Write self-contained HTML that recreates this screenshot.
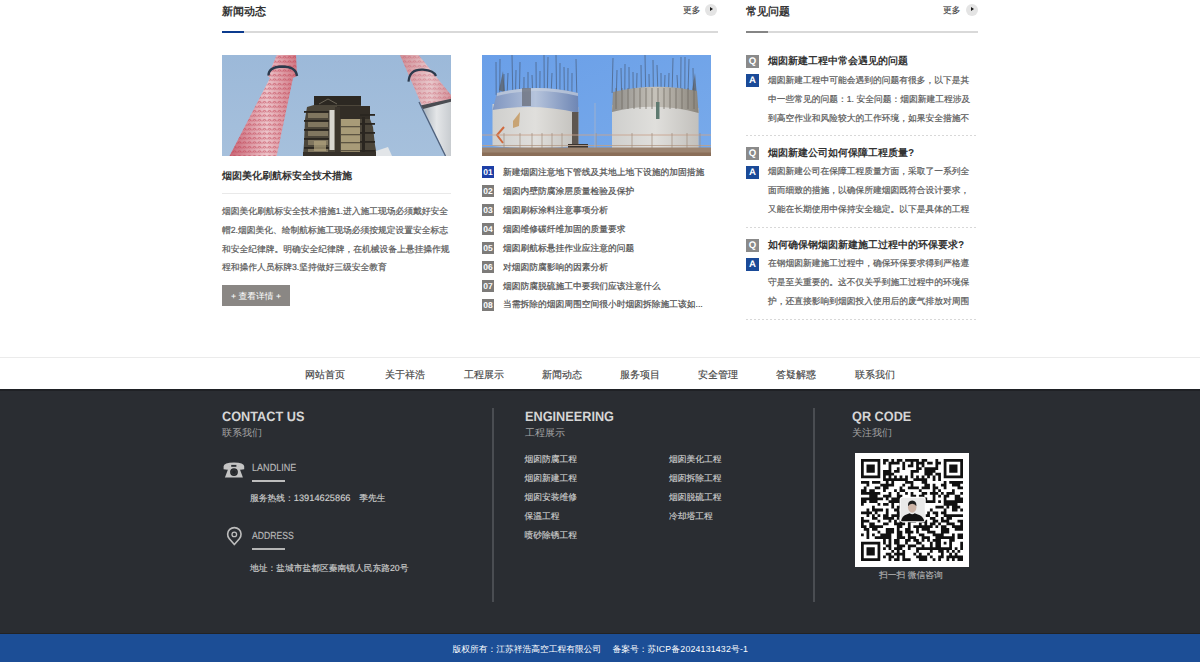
<!DOCTYPE html>
<html><head><meta charset="utf-8">
<style>
*{margin:0;padding:0;box-sizing:border-box}
html,body{width:1200px;height:662px;overflow:hidden;background:#fff}
body{position:relative;font-family:"Liberation Sans",sans-serif;color:#333;text-rendering:geometricPrecision}
.abs{position:absolute}
.t{position:absolute;white-space:nowrap;line-height:1}
.h{font-size:11px;font-weight:bold;color:#333}
.more{font-size:8.75px;color:#444;-webkit-text-stroke:0.15px #444}
.circ{position:absolute;width:12px;height:12px;border-radius:50%;background:#e4e4e4}
.circ:after{content:"";position:absolute;left:5px;top:3.3px;border-left:3px solid #1a1a1a;border-top:2.7px solid transparent;border-bottom:2.7px solid transparent}
.line{position:absolute;height:2px;background:#d9d9d9}
.body{font-size:8.75px;color:#5a5a5a;white-space:nowrap;-webkit-text-stroke:0.2px #5a5a5a}
.badge{position:absolute;width:12px;height:12px;background:#7d7b79;color:#fff;font-size:8.5px;font-weight:bold;line-height:12.5px;text-align:center;font-family:"Liberation Sans",sans-serif}
.li{position:absolute;left:503px;font-size:8.75px;color:#4e4e4e;-webkit-text-stroke:0.2px #4e4e4e;line-height:12px;white-space:nowrap}
.qa{position:absolute;width:13px;height:13px;color:#fff;font-size:9.6px;font-weight:bold;line-height:13.5px;text-align:center}
.qt{position:absolute;left:768px;font-size:10px;font-weight:bold;color:#333;white-space:nowrap;line-height:13px;margin-top:-0.5px}
.ans{position:absolute;left:768px;white-space:nowrap;font-size:8.75px;color:#5a5a5a;-webkit-text-stroke:0.2px #5a5a5a;line-height:18.75px}
.dot{position:absolute;left:746px;width:232px;height:1px;background:repeating-linear-gradient(90deg,#d8d8d8 0 2px,transparent 2px 4px)}
.nav{position:absolute;top:369.5px;font-size:10px;color:#444;-webkit-text-stroke:0.15px #444;white-space:nowrap;line-height:12px;width:78px;text-align:center}
.fh{position:absolute;font-size:13.6px;font-weight:bold;color:#d6d6d6;line-height:1;white-space:nowrap;transform:scaleX(0.935);transform-origin:0 0}
.fs{position:absolute;font-size:10px;color:#a5a5a5;line-height:12px;white-space:nowrap}
.fl{position:absolute;font-size:8.75px;color:#cdcdcd;line-height:12px;white-space:nowrap;-webkit-text-stroke:0.15px currentColor}
</style></head><body>

<!-- ===== News section ===== -->
<div class="t h" style="left:222px;top:6.8px">新闻动态</div>
<div class="t more" style="left:683px;top:5.5px">更多</div>
<div class="circ" style="left:705px;top:4.2px"></div>
<div class="line" style="left:222px;top:31px;width:496px"></div>
<div class="abs" style="left:222px;top:31px;width:22px;height:2px;background:#0c3b8e"></div>

<!-- left photo -->
<svg class="abs" style="left:222px;top:55px" width="229" height="101" viewBox="0 0 229 101">
<defs><linearGradient id="sky1" x1="0" y1="0" x2="0" y2="1"><stop offset="0" stop-color="#9cb9d9"/><stop offset="1" stop-color="#a6c0dc"/></linearGradient>
<linearGradient id="ch1" x1="0" y1="0" x2="1" y2="0"><stop offset="0" stop-color="#c86474"/><stop offset="0.55" stop-color="#ecc4ca"/><stop offset="1" stop-color="#d07884"/></linearGradient>
<linearGradient id="ch2" x1="0" y1="0" x2="1" y2="0"><stop offset="0" stop-color="#d09098"/><stop offset="0.6" stop-color="#e8c8cc"/><stop offset="1" stop-color="#d4949c"/></linearGradient>
<linearGradient id="wh2" x1="0" y1="0" x2="1" y2="0"><stop offset="0" stop-color="#aab2ba"/><stop offset="0.5" stop-color="#e4e6e8"/><stop offset="1" stop-color="#c8ccd0"/></linearGradient>
<pattern id="sw" width="5" height="4.5" patternUnits="userSpaceOnUse"><path d="M0.8 3.2 A1.7 1.7 0 0 1 4.2 3.2" fill="none" stroke="#c03a4e" stroke-width="0.8" opacity="0.9"/><circle cx="2.5" cy="3.2" r="0.6" fill="#d05868" opacity="0.6"/></pattern>
</defs>
<rect width="229" height="101" fill="url(#sky1)"/>
<polygon points="54.7,0 74,0 75,21 71,23 54.6,101 7.5,101 48,23 46,21" fill="url(#ch1)"/>
<polygon points="54.7,0 74,0 75,21 71,23 54.6,101 7.5,101 48,23 46,21" fill="url(#sw)"/>
<path d="M46.5 20.5 Q46.5 12 60 11.5 Q74 11.5 75 21" fill="none" stroke="#2c3a4c" stroke-width="2.4"/>
<polygon points="92,41 139,41 139,51 148,52 148,64 151,72 153,90 155,101 81,101 82,88 83,64 85,52 92,50" fill="#4c463a"/>
<rect x="92" y="41" width="47" height="9" fill="#2c2822"/>
<path d="M97 49 L106 44 L115 49" stroke="#7a7464" stroke-width="0.8" fill="none"/>
<rect x="115" y="51" width="33" height="13" fill="#322d26"/>
<rect x="119" y="64" width="19" height="35" fill="#a89b78"/>
<rect x="119" y="71" width="19" height="1.3" fill="#5c5442"/>
<rect x="119" y="79" width="19" height="1.3" fill="#5c5442"/>
<rect x="119" y="87" width="19" height="1.3" fill="#5c5442"/>
<rect x="119" y="95" width="19" height="1.3" fill="#5c5442"/>
<rect x="86" y="58" width="20" height="5" fill="#8a7f66" opacity="0.85"/>
<rect x="82" y="56" width="25" height="1.8" fill="#2a2620"/>
<rect x="138" y="59" width="15" height="1.8" fill="#2a2620"/>
<rect x="86" y="67" width="20" height="5" fill="#8a7f66" opacity="0.85"/>
<rect x="82" y="65" width="25" height="1.8" fill="#2a2620"/>
<rect x="138" y="68" width="15" height="1.8" fill="#2a2620"/>
<rect x="86" y="76" width="20" height="5" fill="#8a7f66" opacity="0.85"/>
<rect x="82" y="74" width="25" height="1.8" fill="#2a2620"/>
<rect x="138" y="77" width="15" height="1.8" fill="#2a2620"/>
<rect x="86" y="85" width="20" height="5" fill="#8a7f66" opacity="0.85"/>
<rect x="82" y="83" width="25" height="1.8" fill="#2a2620"/>
<rect x="138" y="86" width="15" height="1.8" fill="#2a2620"/>
<rect x="86" y="94" width="20" height="5" fill="#8a7f66" opacity="0.85"/>
<rect x="82" y="92" width="25" height="1.8" fill="#2a2620"/>
<rect x="138" y="95" width="15" height="1.8" fill="#2a2620"/>
<rect x="107.5" y="55" width="5" height="40" fill="#d8d6d0"/>
<rect x="113" y="52" width="5" height="49" fill="#3a342c"/>
<rect x="140" y="62" width="3" height="39" fill="#2a2620"/>
<rect x="92" y="86" width="12" height="10" fill="#b0a27e" opacity="0.7"/>
<rect x="81" y="97" width="74" height="4" fill="#36312a"/>
<polygon points="154,96 166,92 170,101 154,101" fill="#e2e5e8"/>
<polygon points="178,0 196.6,0 229,40 229,45 200.3,51.6" fill="url(#ch2)"/>
<polygon points="178,0 196.6,0 229,40 229,45 200.3,51.6" fill="url(#sw)" opacity="0.6"/>
<polygon points="200.3,51.6 229,45 229,101 224,101" fill="url(#wh2)"/>
<path d="M198.5 50.5 L229 43.8 L229 46.8 L201 54 Z" fill="#4a4c52"/>
<path d="M186.5 26.7 Q187.5 14 201 14.7 Q212 15.5 214 21" fill="none" stroke="#2c3a4c" stroke-width="2.2"/>
<line x1="197" y1="47" x2="223.5" y2="101" stroke="#50607a" stroke-width="1.3"/>
</svg>
<!-- right photo -->
<svg class="abs" style="left:482px;top:55px" width="229" height="101" viewBox="0 0 229 101">
<defs><linearGradient id="sky2" x1="0" y1="0" x2="1" y2="1"><stop offset="0" stop-color="#6a9fe8"/><stop offset="1" stop-color="#78aaea"/></linearGradient>
<linearGradient id="bd1" x1="0" y1="0" x2="1" y2="0"><stop offset="0" stop-color="#cfcfcd"/><stop offset="0.5" stop-color="#e0dfdc"/><stop offset="1" stop-color="#c2c0bc"/></linearGradient>
<linearGradient id="bn1" x1="0" y1="0" x2="1" y2="0"><stop offset="0" stop-color="#8096c0"/><stop offset="0.5" stop-color="#b6c4dc"/><stop offset="1" stop-color="#6e86b4"/></linearGradient>
<linearGradient id="bn2" x1="0" y1="0" x2="1" y2="0"><stop offset="0" stop-color="#8e8c88"/><stop offset="0.5" stop-color="#c6c2ba"/><stop offset="1" stop-color="#8a857c"/></linearGradient>
</defs>
<rect width="229" height="101" fill="url(#sky2)"/>
<line x1="14.0" y1="7" x2="14.2" y2="40" stroke="#3c4658" stroke-width="0.7" opacity="0.75"/>
<line x1="18.0" y1="4" x2="17.7" y2="40" stroke="#3c4658" stroke-width="0.7" opacity="0.75"/>
<line x1="22.0" y1="19" x2="21.9" y2="40" stroke="#3c4658" stroke-width="0.7" opacity="0.75"/>
<line x1="26.0" y1="18" x2="25.1" y2="40" stroke="#3c4658" stroke-width="0.7" opacity="0.75"/>
<line x1="30.0" y1="0" x2="30.8" y2="40" stroke="#3c4658" stroke-width="0.7" opacity="0.75"/>
<line x1="34.0" y1="15" x2="33.5" y2="40" stroke="#3c4658" stroke-width="0.7" opacity="0.75"/>
<line x1="38.0" y1="7" x2="37.4" y2="40" stroke="#3c4658" stroke-width="0.7" opacity="0.75"/>
<line x1="42.0" y1="22" x2="41.9" y2="40" stroke="#3c4658" stroke-width="0.7" opacity="0.75"/>
<line x1="46.0" y1="17" x2="46.0" y2="40" stroke="#3c4658" stroke-width="0.7" opacity="0.75"/>
<line x1="50.0" y1="20" x2="50.7" y2="40" stroke="#3c4658" stroke-width="0.7" opacity="0.75"/>
<line x1="54.0" y1="7" x2="54.3" y2="40" stroke="#3c4658" stroke-width="0.7" opacity="0.75"/>
<line x1="58.0" y1="16" x2="57.8" y2="40" stroke="#3c4658" stroke-width="0.7" opacity="0.75"/>
<line x1="62.0" y1="0" x2="62.3" y2="40" stroke="#3c4658" stroke-width="0.7" opacity="0.75"/>
<line x1="66.0" y1="2" x2="65.3" y2="40" stroke="#3c4658" stroke-width="0.7" opacity="0.75"/>
<line x1="70.0" y1="18" x2="69.1" y2="40" stroke="#3c4658" stroke-width="0.7" opacity="0.75"/>
<line x1="74.0" y1="0" x2="74.6" y2="40" stroke="#3c4658" stroke-width="0.7" opacity="0.75"/>
<line x1="78.0" y1="8" x2="77.9" y2="40" stroke="#3c4658" stroke-width="0.7" opacity="0.75"/>
<line x1="82.0" y1="12" x2="82.4" y2="40" stroke="#3c4658" stroke-width="0.7" opacity="0.75"/>
<line x1="86.0" y1="13" x2="85.8" y2="40" stroke="#3c4658" stroke-width="0.7" opacity="0.75"/>
<line x1="90.0" y1="18" x2="89.9" y2="40" stroke="#3c4658" stroke-width="0.7" opacity="0.75"/>
<line x1="94.0" y1="4" x2="94.8" y2="40" stroke="#3c4658" stroke-width="0.7" opacity="0.75"/>
<line x1="131.0" y1="3" x2="130.1" y2="38" stroke="#3c4658" stroke-width="0.7" opacity="0.75"/>
<line x1="135.0" y1="15" x2="134.4" y2="38" stroke="#3c4658" stroke-width="0.7" opacity="0.75"/>
<line x1="139.0" y1="13" x2="139.6" y2="38" stroke="#3c4658" stroke-width="0.7" opacity="0.75"/>
<line x1="143.0" y1="9" x2="142.8" y2="38" stroke="#3c4658" stroke-width="0.7" opacity="0.75"/>
<line x1="147.0" y1="12" x2="147.1" y2="38" stroke="#3c4658" stroke-width="0.7" opacity="0.75"/>
<line x1="151.0" y1="17" x2="151.2" y2="38" stroke="#3c4658" stroke-width="0.7" opacity="0.75"/>
<line x1="155.0" y1="18" x2="154.5" y2="38" stroke="#3c4658" stroke-width="0.7" opacity="0.75"/>
<line x1="159.0" y1="10" x2="159.4" y2="38" stroke="#3c4658" stroke-width="0.7" opacity="0.75"/>
<line x1="163.0" y1="0" x2="163.7" y2="38" stroke="#3c4658" stroke-width="0.7" opacity="0.75"/>
<line x1="167.0" y1="19" x2="167.3" y2="38" stroke="#3c4658" stroke-width="0.7" opacity="0.75"/>
<line x1="171.0" y1="5" x2="171.4" y2="38" stroke="#3c4658" stroke-width="0.7" opacity="0.75"/>
<line x1="175.0" y1="10" x2="175.9" y2="38" stroke="#3c4658" stroke-width="0.7" opacity="0.75"/>
<line x1="179.0" y1="18" x2="179.1" y2="38" stroke="#3c4658" stroke-width="0.7" opacity="0.75"/>
<line x1="183.0" y1="20" x2="182.4" y2="38" stroke="#3c4658" stroke-width="0.7" opacity="0.75"/>
<line x1="187.0" y1="18" x2="186.5" y2="38" stroke="#3c4658" stroke-width="0.7" opacity="0.75"/>
<line x1="191.0" y1="3" x2="190.1" y2="38" stroke="#3c4658" stroke-width="0.7" opacity="0.75"/>
<line x1="195.0" y1="20" x2="196.0" y2="38" stroke="#3c4658" stroke-width="0.7" opacity="0.75"/>
<line x1="199.0" y1="2" x2="198.7" y2="38" stroke="#3c4658" stroke-width="0.7" opacity="0.75"/>
<line x1="203.0" y1="2" x2="202.8" y2="38" stroke="#3c4658" stroke-width="0.7" opacity="0.75"/>
<line x1="207.0" y1="4" x2="206.0" y2="38" stroke="#3c4658" stroke-width="0.7" opacity="0.75"/>
<line x1="211.0" y1="13" x2="211.5" y2="38" stroke="#3c4658" stroke-width="0.7" opacity="0.75"/>
<polygon points="17,35 21,16 23,38" fill="#5a5a5a" opacity="0.7"/>
<polygon points="210,36 213,18 215,42" fill="#5a5a5a" opacity="0.7"/>
<path d="M10.5 49 L96.4 52 L96.4 91 Q53 95 10.5 91 Z" fill="url(#bd1)"/>
<path d="M15 38 Q53 28 96 38 L96.4 58 Q53 48 10.5 55 Z" fill="url(#bn1)"/>
<path d="M15 38 Q53 28 96 38 L96 41 Q53 31 15 41 Z" fill="#c6d0e0" opacity="0.7"/>
<rect x="40" y="33" width="9" height="18" fill="#6a6e78" opacity="0.75"/>
<rect x="90" y="57" width="6.4" height="33" fill="#5e5650"/>
<path d="M22 72 L15 80 L21 88" fill="none" stroke="#d06a3e" stroke-width="2"/>
<polygon points="31,66 38,57 37,71 31,73" fill="#c8a474"/>
<rect x="86" y="89" width="20" height="6" fill="#3a3430"/>
<path d="M130 50 Q173 44 216.6 53 L216.6 95 Q173 99 130 95 Z" fill="url(#bd1)"/>
<path d="M131 37 Q173 27 215 36 L216.6 58 Q173 46 130 57 Z" fill="url(#bn2)"/>
<line x1="134" y1="33" x2="134" y2="54" stroke="#6c665c" stroke-width="0.7"/>
<line x1="140" y1="33" x2="140" y2="54" stroke="#6c665c" stroke-width="0.7"/>
<line x1="146" y1="33" x2="146" y2="54" stroke="#6c665c" stroke-width="0.7"/>
<line x1="152" y1="33" x2="152" y2="54" stroke="#6c665c" stroke-width="0.7"/>
<line x1="158" y1="33" x2="158" y2="54" stroke="#6c665c" stroke-width="0.7"/>
<line x1="164" y1="33" x2="164" y2="54" stroke="#6c665c" stroke-width="0.7"/>
<line x1="170" y1="33" x2="170" y2="54" stroke="#6c665c" stroke-width="0.7"/>
<line x1="176" y1="33" x2="176" y2="54" stroke="#6c665c" stroke-width="0.7"/>
<line x1="182" y1="33" x2="182" y2="54" stroke="#6c665c" stroke-width="0.7"/>
<line x1="188" y1="33" x2="188" y2="54" stroke="#6c665c" stroke-width="0.7"/>
<line x1="194" y1="33" x2="194" y2="54" stroke="#6c665c" stroke-width="0.7"/>
<line x1="200" y1="33" x2="200" y2="54" stroke="#6c665c" stroke-width="0.7"/>
<line x1="206" y1="33" x2="206" y2="54" stroke="#6c665c" stroke-width="0.7"/>
<line x1="212" y1="33" x2="212" y2="54" stroke="#6c665c" stroke-width="0.7"/>
<rect x="174" y="47" width="3.5" height="17" fill="#5e7a70"/>
<line x1="0" y1="80" x2="229" y2="80" stroke="#c8a48e" stroke-width="0.9"/>
<line x1="0" y1="90.5" x2="229" y2="90.5" stroke="#b8a08e" stroke-width="0.9"/>
<line x1="22" y1="78" x2="22" y2="95" stroke="#a08e7c" stroke-width="0.7"/>
<line x1="38" y1="78" x2="38" y2="95" stroke="#a08e7c" stroke-width="0.7"/>
<line x1="50" y1="78" x2="50" y2="95" stroke="#a08e7c" stroke-width="0.7"/>
<line x1="60" y1="78" x2="60" y2="95" stroke="#a08e7c" stroke-width="0.7"/>
<line x1="70" y1="78" x2="70" y2="95" stroke="#a08e7c" stroke-width="0.7"/>
<line x1="80" y1="78" x2="80" y2="95" stroke="#a08e7c" stroke-width="0.7"/>
<line x1="114" y1="78" x2="114" y2="95" stroke="#a08e7c" stroke-width="0.7"/>
<line x1="150" y1="78" x2="150" y2="95" stroke="#a08e7c" stroke-width="0.7"/>
<line x1="170" y1="78" x2="170" y2="95" stroke="#a08e7c" stroke-width="0.7"/>
<line x1="190" y1="78" x2="190" y2="95" stroke="#a08e7c" stroke-width="0.7"/>
<line x1="205" y1="78" x2="205" y2="95" stroke="#a08e7c" stroke-width="0.7"/>
<line x1="218" y1="78" x2="218" y2="95" stroke="#a08e7c" stroke-width="0.7"/>
<line x1="113" y1="48" x2="113" y2="95" stroke="#a8b4c8" stroke-width="0.8"/>
<rect x="0" y="92.5" width="229" height="8.5" fill="#9c8470"/>
<rect x="0" y="97.5" width="229" height="3.5" fill="#8a6e58"/>
</svg>

<!-- left article -->
<div class="t h" style="left:222px;top:171.5px;font-size:10px">烟囱美化刷航标安全技术措施</div>
<div class="abs" style="left:222px;top:193px;width:229px;height:1px;background:#e9e9e9"></div>
<div class="abs body" style="left:222px;top:202px;line-height:18.75px">烟囱美化刷航标安全技术措施1.进入施工现场必须戴好安全<br>帽2.烟囱美化、绘制航标施工现场必须按规定设置安全标志<br>和安全纪律牌。明确安全纪律牌，在机械设备上悬挂操作规<br>程和操作人员标牌3.坚持做好三级安全教育</div>
<div class="abs" style="left:222px;top:285px;width:68px;height:21px;background:#8a8784;color:#fff;font-size:8.75px;line-height:23px;text-align:center">+ 查看详情 +</div>

<!-- middle list -->
<div class="badge" style="left:482px;top:166px;background:#1d3fa6">01</div><div class="li" style="top:165.5px">新建烟囱注意地下管线及其地上地下设施的加固措施</div>
<div class="badge" style="left:482px;top:185px">02</div><div class="li" style="top:184.5px">烟囱内壁防腐涂层质量检验及保护</div>
<div class="badge" style="left:482px;top:204px">03</div><div class="li" style="top:203.5px">烟囱刷标涂料注意事项分析</div>
<div class="badge" style="left:482px;top:223px">04</div><div class="li" style="top:222.5px">烟囱维修碳纤维加固的质量要求</div>
<div class="badge" style="left:482px;top:242px">05</div><div class="li" style="top:241.5px">烟囱刷航标悬挂作业应注意的问题</div>
<div class="badge" style="left:482px;top:261px">06</div><div class="li" style="top:260.5px">对烟囱防腐影响的因素分析</div>
<div class="badge" style="left:482px;top:280px">07</div><div class="li" style="top:279.5px">烟囱防腐脱硫施工中要我们应该注意什么</div>
<div class="badge" style="left:482px;top:298.5px">08</div><div class="li" style="top:298.0px">当需拆除的烟囱周围空间很小时烟囱拆除施工该如...</div>

<!-- ===== FAQ section ===== -->
<div class="t h" style="left:746px;top:6.8px">常见问题</div>
<div class="t more" style="left:943px;top:5.5px">更多</div>
<div class="circ" style="left:966px;top:4.2px"></div>
<div class="line" style="left:746px;top:31px;width:232px"></div>
<div class="abs" style="left:746px;top:31px;width:22px;height:2px;background:#858585"></div>

<div class="qa" style="left:746px;top:55px;background:#8a8a8a">Q</div>
<div class="qt" style="top:55px">烟囱新建工程中常会遇见的问题</div>
<div class="qa" style="left:746px;top:74px;background:#1a4a98">A</div>
<div class="ans" style="top:71px">烟囱新建工程中可能会遇到的问题有很多，以下是其<br>中一些常见的问题：1. 安全问题：烟囱新建工程涉及<br>到高空作业和风险较大的工作环境，如果安全措施不</div>
<div class="dot" style="top:135px"></div>

<div class="qa" style="left:746px;top:147px;background:#8a8a8a">Q</div>
<div class="qt" style="top:147px">烟囱新建公司如何保障工程质量?</div>
<div class="qa" style="left:746px;top:166px;background:#1a4a98">A</div>
<div class="ans" style="top:162px">烟囱新建公司在保障工程质量方面，采取了一系列全<br>面而细致的措施，以确保所建烟囱既符合设计要求，<br>又能在长期使用中保持安全稳定。以下是具体的工程</div>
<div class="dot" style="top:227px"></div>

<div class="qa" style="left:746px;top:239px;background:#8a8a8a">Q</div>
<div class="qt" style="top:239px">如何确保钢烟囱新建施工过程中的环保要求?</div>
<div class="qa" style="left:746px;top:258px;background:#1a4a98">A</div>
<div class="ans" style="top:254px">在钢烟囱新建施工过程中，确保环保要求得到严格遵<br>守是至关重要的。这不仅关乎到施工过程中的环境保<br>护，还直接影响到烟囱投入使用后的废气排放对周围</div>
<div class="dot" style="top:319px"></div>

<!-- ===== Nav ===== -->
<div class="abs" style="left:0;top:357px;width:1200px;height:1px;background:#ebebeb"></div>
<div class="nav" style="left:286px">网站首页</div>
<div class="nav" style="left:366px">关于祥浩</div>
<div class="nav" style="left:445px">工程展示</div>
<div class="nav" style="left:523px">新闻动态</div>
<div class="nav" style="left:601px">服务项目</div>
<div class="nav" style="left:679px">安全管理</div>
<div class="nav" style="left:757px">答疑解惑</div>
<div class="nav" style="left:836px">联系我们</div>

<!-- ===== Footer ===== -->
<div class="abs" style="left:0;top:389px;width:1200px;height:246px;background:#2a2d32"></div>
<div class="abs" style="left:0;top:389px;width:1200px;height:2px;background:#1f2125"></div>
<div class="abs" style="left:0;top:632.5px;width:1200px;height:1.2px;background:#222325"></div><div class="abs" style="left:0;top:633.7px;width:1200px;height:29px;background:#1c4e96"></div>

<div class="fh" style="left:222px;top:409.5px">CONTACT US</div>
<div class="fs" style="left:222px;top:428px">联系我们</div>
<div class="fh" style="left:524.5px;top:409.5px">ENGINEERING</div>
<div class="fs" style="left:525px;top:428px">工程展示</div>
<div class="fh" style="left:852px;top:409.5px">QR CODE</div>
<div class="fs" style="left:852px;top:428px">关注我们</div>

<div class="abs" style="left:492px;top:407.5px;width:2px;height:194.5px;background:#4a4d52"></div>
<div class="abs" style="left:813px;top:407.5px;width:2px;height:194.5px;background:#4a4d52"></div>

<svg class="abs" style="left:220px;top:458px" width="28" height="24" viewBox="0 0 28 24">
<path d="M3.6 8.2 Q3.8 4.4 14 4.4 Q24 4.4 24.2 8.2 L24.2 11.2 Q21.5 11.9 19 11.6 L18.6 8.6 L9.4 8.6 L9 11.6 Q6.5 11.9 3.6 11.2 Z" fill="#c4c4c4"/>
<polygon points="9.6,7.2 18.4,7.2 22.9,19.6 4.9,19.6" fill="#c4c4c4"/>
<rect x="11.2" y="6.9" width="5.2" height="1.9" fill="#2a2d32"/>
<circle cx="14" cy="14.1" r="3.9" fill="#24262a"/>
<circle cx="14" cy="14.1" r="2.4" fill="none" stroke="#3a3c40" stroke-width="0.8"/>
</svg>
<svg class="abs" style="left:222px;top:522px" width="26" height="28" viewBox="0 0 26 28">
<path d="M12.35 22.6 L7.3 16.7 A6.7 6.7 0 1 1 17.4 16.7 Z" fill="none" stroke="#bdbdbd" stroke-width="1.6" stroke-linejoin="round"/>
<circle cx="12.3" cy="12.4" r="2.3" fill="none" stroke="#bdbdbd" stroke-width="1.3"/>
</svg>
<div class="fl" style="left:251.5px;top:462.5px;font-size:10.3px;color:#b9b9b9;transform:scaleX(0.88);transform-origin:0 0">LANDLINE</div>
<div class="abs" style="left:251.5px;top:480px;width:33.5px;height:2px;background:#bdbdbd"></div>
<div class="fl" style="left:250px;top:492px">服务热线：<span style="font-size:9.2px;letter-spacing:0.05px">13914625866</span>　季先生</div>
<div class="fl" style="left:251.5px;top:530.5px;font-size:10.3px;color:#b9b9b9;transform:scaleX(0.84);transform-origin:0 0">ADDRESS</div>
<div class="abs" style="left:251.5px;top:548px;width:33.5px;height:2px;background:#b5b5b5"></div>
<div class="fl" style="left:250px;top:562px">地址：盐城市盐都区秦南镇人民东路20号</div>

<div class="fl" style="left:524.5px;top:453.0px">烟囱防腐工程</div>
<div class="fl" style="left:524.5px;top:472.0px">烟囱新建工程</div>
<div class="fl" style="left:524.5px;top:491.0px">烟囱安装维修</div>
<div class="fl" style="left:524.5px;top:510.0px">保温工程</div>
<div class="fl" style="left:524.5px;top:529.0px">喷砂除锈工程</div>
<div class="fl" style="left:669px;top:453.0px">烟囱美化工程</div>
<div class="fl" style="left:669px;top:472.0px">烟囱拆除工程</div>
<div class="fl" style="left:669px;top:491.0px">烟囱脱硫工程</div>
<div class="fl" style="left:669px;top:510.0px">冷却塔工程</div>

<div class="abs" style="left:855px;top:453px;width:114px;height:114px;background:#fff"></div>
<svg class="abs" style="left:861px;top:459px" width="102" height="102" viewBox="0 0 101.6 101.6"><path d="M0.00 0.00h19.22v2.75h-19.22zM21.97 0.00h5.49v2.75h-5.49zM30.21 0.00h2.75v2.75h-2.75zM35.70 0.00h5.49v2.75h-5.49zM43.94 0.00h13.73v2.75h-13.73zM60.41 0.00h5.49v2.75h-5.49zM74.14 0.00h2.75v2.75h-2.75zM82.38 0.00h19.22v2.75h-19.22zM0.00 2.75h2.75v2.75h-2.75zM16.48 2.75h2.75v2.75h-2.75zM21.97 2.75h2.75v2.75h-2.75zM27.46 2.75h10.98v2.75h-10.98zM41.19 2.75h2.75v2.75h-2.75zM49.43 2.75h2.75v2.75h-2.75zM54.92 2.75h8.24v2.75h-8.24zM65.90 2.75h5.49v2.75h-5.49zM74.14 2.75h5.49v2.75h-5.49zM82.38 2.75h2.75v2.75h-2.75zM98.86 2.75h2.75v2.75h-2.75zM0.00 5.49h2.75v2.75h-2.75zM5.49 5.49h8.24v2.75h-8.24zM16.48 5.49h2.75v2.75h-2.75zM27.46 5.49h2.75v2.75h-2.75zM41.19 5.49h2.75v2.75h-2.75zM46.68 5.49h5.49v2.75h-5.49zM54.92 5.49h2.75v2.75h-2.75zM60.41 5.49h2.75v2.75h-2.75zM74.14 5.49h2.75v2.75h-2.75zM82.38 5.49h2.75v2.75h-2.75zM87.87 5.49h8.24v2.75h-8.24zM98.86 5.49h2.75v2.75h-2.75zM0.00 8.24h2.75v2.75h-2.75zM5.49 8.24h8.24v2.75h-8.24zM16.48 8.24h2.75v2.75h-2.75zM27.46 8.24h2.75v2.75h-2.75zM35.70 8.24h2.75v2.75h-2.75zM41.19 8.24h2.75v2.75h-2.75zM54.92 8.24h5.49v2.75h-5.49zM63.16 8.24h13.73v2.75h-13.73zM82.38 8.24h2.75v2.75h-2.75zM87.87 8.24h8.24v2.75h-8.24zM98.86 8.24h2.75v2.75h-2.75zM0.00 10.98h2.75v2.75h-2.75zM5.49 10.98h8.24v2.75h-8.24zM16.48 10.98h2.75v2.75h-2.75zM21.97 10.98h8.24v2.75h-8.24zM32.95 10.98h5.49v2.75h-5.49zM49.43 10.98h8.24v2.75h-8.24zM63.16 10.98h10.98v2.75h-10.98zM82.38 10.98h2.75v2.75h-2.75zM87.87 10.98h8.24v2.75h-8.24zM98.86 10.98h2.75v2.75h-2.75zM0.00 13.73h2.75v2.75h-2.75zM16.48 13.73h2.75v2.75h-2.75zM21.97 13.73h10.98v2.75h-10.98zM49.43 13.73h2.75v2.75h-2.75zM63.16 13.73h8.24v2.75h-8.24zM74.14 13.73h5.49v2.75h-5.49zM82.38 13.73h2.75v2.75h-2.75zM98.86 13.73h2.75v2.75h-2.75zM0.00 16.48h19.22v2.75h-19.22zM21.97 16.48h2.75v2.75h-2.75zM27.46 16.48h2.75v2.75h-2.75zM32.95 16.48h2.75v2.75h-2.75zM38.44 16.48h2.75v2.75h-2.75zM43.94 16.48h2.75v2.75h-2.75zM49.43 16.48h2.75v2.75h-2.75zM54.92 16.48h2.75v2.75h-2.75zM60.41 16.48h2.75v2.75h-2.75zM65.90 16.48h2.75v2.75h-2.75zM71.40 16.48h2.75v2.75h-2.75zM76.89 16.48h2.75v2.75h-2.75zM82.38 16.48h19.22v2.75h-19.22zM21.97 19.22h24.71v2.75h-24.71zM52.17 19.22h13.73v2.75h-13.73zM71.40 19.22h2.75v2.75h-2.75zM76.89 19.22h2.75v2.75h-2.75zM0.00 21.97h8.24v2.75h-8.24zM10.98 21.97h8.24v2.75h-8.24zM24.71 21.97h2.75v2.75h-2.75zM30.21 21.97h2.75v2.75h-2.75zM43.94 21.97h8.24v2.75h-8.24zM60.41 21.97h5.49v2.75h-5.49zM82.38 21.97h2.75v2.75h-2.75zM87.87 21.97h13.73v2.75h-13.73zM5.49 24.71h2.75v2.75h-2.75zM19.22 24.71h13.73v2.75h-13.73zM41.19 24.71h2.75v2.75h-2.75zM49.43 24.71h2.75v2.75h-2.75zM63.16 24.71h5.49v2.75h-5.49zM71.40 24.71h2.75v2.75h-2.75zM79.63 24.71h5.49v2.75h-5.49zM90.62 24.71h8.24v2.75h-8.24zM2.75 27.46h2.75v2.75h-2.75zM13.73 27.46h5.49v2.75h-5.49zM21.97 27.46h5.49v2.75h-5.49zM38.44 27.46h2.75v2.75h-2.75zM46.68 27.46h10.98v2.75h-10.98zM60.41 27.46h8.24v2.75h-8.24zM71.40 27.46h5.49v2.75h-5.49zM82.38 27.46h2.75v2.75h-2.75zM96.11 27.46h5.49v2.75h-5.49zM0.00 30.21h5.49v2.75h-5.49zM8.24 30.21h5.49v2.75h-5.49zM21.97 30.21h2.75v2.75h-2.75zM32.95 30.21h2.75v2.75h-2.75zM38.44 30.21h5.49v2.75h-5.49zM57.67 30.21h2.75v2.75h-2.75zM71.40 30.21h2.75v2.75h-2.75zM76.89 30.21h2.75v2.75h-2.75zM90.62 30.21h2.75v2.75h-2.75zM0.00 32.95h19.22v2.75h-19.22zM27.46 32.95h2.75v2.75h-2.75zM35.70 32.95h2.75v2.75h-2.75zM43.94 32.95h2.75v2.75h-2.75zM49.43 32.95h2.75v2.75h-2.75zM60.41 32.95h5.49v2.75h-5.49zM68.65 32.95h8.24v2.75h-8.24zM79.63 32.95h2.75v2.75h-2.75zM85.13 32.95h8.24v2.75h-8.24zM98.86 32.95h2.75v2.75h-2.75zM8.24 35.70h8.24v2.75h-8.24zM21.97 35.70h8.24v2.75h-8.24zM35.70 35.70h5.49v2.75h-5.49zM49.43 35.70h5.49v2.75h-5.49zM57.67 35.70h5.49v2.75h-5.49zM71.40 35.70h2.75v2.75h-2.75zM76.89 35.70h2.75v2.75h-2.75zM82.38 35.70h5.49v2.75h-5.49zM93.36 35.70h5.49v2.75h-5.49zM0.00 38.44h21.97v2.75h-21.97zM24.71 38.44h2.75v2.75h-2.75zM30.21 38.44h13.73v2.75h-13.73zM49.43 38.44h5.49v2.75h-5.49zM57.67 38.44h2.75v2.75h-2.75zM63.16 38.44h2.75v2.75h-2.75zM71.40 38.44h2.75v2.75h-2.75zM82.38 38.44h2.75v2.75h-2.75zM93.36 38.44h8.24v2.75h-8.24zM0.00 41.19h5.49v2.75h-5.49zM8.24 41.19h8.24v2.75h-8.24zM27.46 41.19h19.22v2.75h-19.22zM54.92 41.19h2.75v2.75h-2.75zM60.41 41.19h13.73v2.75h-13.73zM76.89 41.19h2.75v2.75h-2.75zM82.38 41.19h19.22v2.75h-19.22zM0.00 43.94h2.75v2.75h-2.75zM16.48 43.94h2.75v2.75h-2.75zM21.97 43.94h5.49v2.75h-5.49zM30.21 43.94h2.75v2.75h-2.75zM38.44 43.94h2.75v2.75h-2.75zM54.92 43.94h2.75v2.75h-2.75zM82.38 43.94h13.73v2.75h-13.73zM10.98 46.68h2.75v2.75h-2.75zM30.21 46.68h2.75v2.75h-2.75zM35.70 46.68h8.24v2.75h-8.24zM46.68 46.68h2.75v2.75h-2.75zM57.67 46.68h5.49v2.75h-5.49zM74.14 46.68h8.24v2.75h-8.24zM85.13 46.68h2.75v2.75h-2.75zM90.62 46.68h8.24v2.75h-8.24zM5.49 49.43h2.75v2.75h-2.75zM10.98 49.43h10.98v2.75h-10.98zM24.71 49.43h2.75v2.75h-2.75zM32.95 49.43h5.49v2.75h-5.49zM43.94 49.43h8.24v2.75h-8.24zM54.92 49.43h2.75v2.75h-2.75zM60.41 49.43h2.75v2.75h-2.75zM68.65 49.43h2.75v2.75h-2.75zM82.38 49.43h2.75v2.75h-2.75zM90.62 49.43h5.49v2.75h-5.49zM98.86 49.43h2.75v2.75h-2.75zM0.00 52.17h10.98v2.75h-10.98zM13.73 52.17h2.75v2.75h-2.75zM24.71 52.17h2.75v2.75h-2.75zM35.70 52.17h8.24v2.75h-8.24zM49.43 52.17h13.73v2.75h-13.73zM65.90 52.17h2.75v2.75h-2.75zM71.40 52.17h5.49v2.75h-5.49zM79.63 52.17h5.49v2.75h-5.49zM5.49 54.92h2.75v2.75h-2.75zM10.98 54.92h2.75v2.75h-2.75zM16.48 54.92h2.75v2.75h-2.75zM21.97 54.92h5.49v2.75h-5.49zM30.21 54.92h10.98v2.75h-10.98zM46.68 54.92h2.75v2.75h-2.75zM52.17 54.92h2.75v2.75h-2.75zM57.67 54.92h10.98v2.75h-10.98zM74.14 54.92h2.75v2.75h-2.75zM82.38 54.92h19.22v2.75h-19.22zM0.00 57.67h2.75v2.75h-2.75zM10.98 57.67h5.49v2.75h-5.49zM21.97 57.67h10.98v2.75h-10.98zM35.70 57.67h2.75v2.75h-2.75zM46.68 57.67h13.73v2.75h-13.73zM68.65 57.67h5.49v2.75h-5.49zM79.63 57.67h2.75v2.75h-2.75zM85.13 57.67h5.49v2.75h-5.49zM0.00 60.41h8.24v2.75h-8.24zM16.48 60.41h2.75v2.75h-2.75zM27.46 60.41h2.75v2.75h-2.75zM32.95 60.41h2.75v2.75h-2.75zM38.44 60.41h2.75v2.75h-2.75zM46.68 60.41h8.24v2.75h-8.24zM60.41 60.41h5.49v2.75h-5.49zM71.40 60.41h5.49v2.75h-5.49zM79.63 60.41h8.24v2.75h-8.24zM96.11 60.41h5.49v2.75h-5.49zM0.00 63.16h2.75v2.75h-2.75zM8.24 63.16h5.49v2.75h-5.49zM21.97 63.16h5.49v2.75h-5.49zM32.95 63.16h10.98v2.75h-10.98zM46.68 63.16h2.75v2.75h-2.75zM57.67 63.16h2.75v2.75h-2.75zM63.16 63.16h2.75v2.75h-2.75zM68.65 63.16h5.49v2.75h-5.49zM76.89 63.16h2.75v2.75h-2.75zM85.13 63.16h8.24v2.75h-8.24zM98.86 63.16h2.75v2.75h-2.75zM0.00 65.90h5.49v2.75h-5.49zM8.24 65.90h13.73v2.75h-13.73zM35.70 65.90h5.49v2.75h-5.49zM46.68 65.90h2.75v2.75h-2.75zM52.17 65.90h19.22v2.75h-19.22zM74.14 65.90h2.75v2.75h-2.75zM79.63 65.90h5.49v2.75h-5.49zM90.62 65.90h10.98v2.75h-10.98zM2.75 68.65h5.49v2.75h-5.49zM10.98 68.65h5.49v2.75h-5.49zM24.71 68.65h8.24v2.75h-8.24zM35.70 68.65h2.75v2.75h-2.75zM43.94 68.65h5.49v2.75h-5.49zM54.92 68.65h2.75v2.75h-2.75zM60.41 68.65h8.24v2.75h-8.24zM79.63 68.65h8.24v2.75h-8.24zM93.36 68.65h8.24v2.75h-8.24zM5.49 71.40h2.75v2.75h-2.75zM16.48 71.40h2.75v2.75h-2.75zM24.71 71.40h8.24v2.75h-8.24zM35.70 71.40h5.49v2.75h-5.49zM43.94 71.40h8.24v2.75h-8.24zM54.92 71.40h2.75v2.75h-2.75zM65.90 71.40h8.24v2.75h-8.24zM79.63 71.40h8.24v2.75h-8.24zM0.00 74.14h2.75v2.75h-2.75zM5.49 74.14h2.75v2.75h-2.75zM10.98 74.14h2.75v2.75h-2.75zM19.22 74.14h10.98v2.75h-10.98zM35.70 74.14h5.49v2.75h-5.49zM46.68 74.14h2.75v2.75h-2.75zM57.67 74.14h5.49v2.75h-5.49zM71.40 74.14h10.98v2.75h-10.98zM90.62 74.14h2.75v2.75h-2.75zM96.11 74.14h5.49v2.75h-5.49zM5.49 76.89h2.75v2.75h-2.75zM13.73 76.89h16.48v2.75h-16.48zM35.70 76.89h8.24v2.75h-8.24zM46.68 76.89h8.24v2.75h-8.24zM60.41 76.89h8.24v2.75h-8.24zM74.14 76.89h19.22v2.75h-19.22zM96.11 76.89h5.49v2.75h-5.49zM21.97 79.63h2.75v2.75h-2.75zM27.46 79.63h2.75v2.75h-2.75zM32.95 79.63h5.49v2.75h-5.49zM43.94 79.63h5.49v2.75h-5.49zM52.17 79.63h5.49v2.75h-5.49zM60.41 79.63h2.75v2.75h-2.75zM65.90 79.63h2.75v2.75h-2.75zM71.40 79.63h8.24v2.75h-8.24zM87.87 79.63h5.49v2.75h-5.49zM0.00 82.38h19.22v2.75h-19.22zM21.97 82.38h2.75v2.75h-2.75zM27.46 82.38h2.75v2.75h-2.75zM32.95 82.38h5.49v2.75h-5.49zM43.94 82.38h2.75v2.75h-2.75zM54.92 82.38h5.49v2.75h-5.49zM68.65 82.38h2.75v2.75h-2.75zM74.14 82.38h5.49v2.75h-5.49zM82.38 82.38h2.75v2.75h-2.75zM87.87 82.38h2.75v2.75h-2.75zM98.86 82.38h2.75v2.75h-2.75zM0.00 85.13h2.75v2.75h-2.75zM16.48 85.13h2.75v2.75h-2.75zM24.71 85.13h5.49v2.75h-5.49zM35.70 85.13h8.24v2.75h-8.24zM46.68 85.13h8.24v2.75h-8.24zM60.41 85.13h2.75v2.75h-2.75zM68.65 85.13h2.75v2.75h-2.75zM74.14 85.13h5.49v2.75h-5.49zM87.87 85.13h2.75v2.75h-2.75zM98.86 85.13h2.75v2.75h-2.75zM0.00 87.87h2.75v2.75h-2.75zM5.49 87.87h8.24v2.75h-8.24zM16.48 87.87h2.75v2.75h-2.75zM21.97 87.87h2.75v2.75h-2.75zM27.46 87.87h2.75v2.75h-2.75zM32.95 87.87h8.24v2.75h-8.24zM46.68 87.87h2.75v2.75h-2.75zM54.92 87.87h35.70v2.75h-35.70zM93.36 87.87h2.75v2.75h-2.75zM98.86 87.87h2.75v2.75h-2.75zM0.00 90.62h2.75v2.75h-2.75zM5.49 90.62h8.24v2.75h-8.24zM16.48 90.62h2.75v2.75h-2.75zM30.21 90.62h2.75v2.75h-2.75zM35.70 90.62h2.75v2.75h-2.75zM41.19 90.62h2.75v2.75h-2.75zM54.92 90.62h2.75v2.75h-2.75zM68.65 90.62h2.75v2.75h-2.75zM76.89 90.62h5.49v2.75h-5.49zM85.13 90.62h2.75v2.75h-2.75zM90.62 90.62h2.75v2.75h-2.75zM96.11 90.62h2.75v2.75h-2.75zM0.00 93.36h2.75v2.75h-2.75zM5.49 93.36h8.24v2.75h-8.24zM16.48 93.36h2.75v2.75h-2.75zM24.71 93.36h5.49v2.75h-5.49zM32.95 93.36h10.98v2.75h-10.98zM52.17 93.36h2.75v2.75h-2.75zM57.67 93.36h2.75v2.75h-2.75zM65.90 93.36h2.75v2.75h-2.75zM79.63 93.36h2.75v2.75h-2.75zM87.87 93.36h2.75v2.75h-2.75zM93.36 93.36h2.75v2.75h-2.75zM0.00 96.11h2.75v2.75h-2.75zM16.48 96.11h2.75v2.75h-2.75zM21.97 96.11h2.75v2.75h-2.75zM27.46 96.11h5.49v2.75h-5.49zM35.70 96.11h2.75v2.75h-2.75zM41.19 96.11h2.75v2.75h-2.75zM54.92 96.11h10.98v2.75h-10.98zM68.65 96.11h2.75v2.75h-2.75zM76.89 96.11h5.49v2.75h-5.49zM85.13 96.11h16.48v2.75h-16.48zM0.00 98.86h19.22v2.75h-19.22zM27.46 98.86h2.75v2.75h-2.75zM32.95 98.86h5.49v2.75h-5.49zM41.19 98.86h8.24v2.75h-8.24zM57.67 98.86h8.24v2.75h-8.24zM71.40 98.86h2.75v2.75h-2.75zM76.89 98.86h2.75v2.75h-2.75zM85.13 98.86h2.75v2.75h-2.75zM90.62 98.86h2.75v2.75h-2.75zM96.11 98.86h5.49v2.75h-5.49z" fill="#111"/><rect x="38.5" y="37.5" width="26" height="25.5" rx="3" fill="#fff"/><rect x="39.5" y="38.5" width="24" height="23.5" rx="2.5" fill="#e9e9e9"/><ellipse cx="51" cy="48" rx="4.2" ry="5.5" fill="#cdb4a6"/><path d="M46.8 47 Q46.5 41.5 51 41.3 Q55.5 41.5 55.2 47 Q54 44.5 51 44.5 Q48 44.5 46.8 47 Z" fill="#1e1e1e"/><path d="M40 62 Q40.5 56.5 46 55 L48.5 54 Q51 56 53.5 54 L56 55 Q62 56.5 63 62 Z" fill="#121212"/></svg>
<div class="fl" style="left:879px;top:569px;color:#b0b0b0">扫一扫 微信咨询</div>

<div class="t" style="left:452.5px;top:644.5px;font-size:8.75px;color:#fff">版权所有：江苏祥浩高空工程有限公司　 备案号：苏<span style="letter-spacing:0.2px">ICP备2024131432号-1</span></div>

</body></html>
